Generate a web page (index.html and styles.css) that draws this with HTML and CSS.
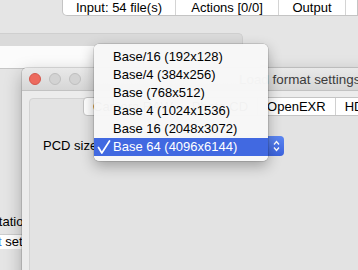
FILE: index.html
```html
<!DOCTYPE html>
<html>
<head>
<meta charset="utf-8">
<link rel="stylesheet" href="styles.css">
</head>
<body>
<div class="backwin">
  <div class="topbar">
    <div class="seg s1">Input: 54 file(s)</div>
    <div class="seg s2">Actions [0/0]</div>
    <div class="seg s3">Output</div>
    <div class="seg s4"></div>
  </div>
  <div class="gap1"></div>
  <div class="band"></div>
  <div class="field"></div>
  <div class="lower">
    <div class="lbl">Orientation</div>
    <div class="tf"><span class="blue">t</span> set</div>
  </div>
</div>

<div class="frontwin">
  <div class="titlebar">
    <span class="light red"></span>
    <span class="light"></span>
    <span class="light"></span>
    <span class="title">Load format settings:</span>
  </div>
  <div class="content">
    <div class="pane">
      <div class="tabs">
        <div class="tab">Camera RAW</div>
        <div class="tab">Photo CD</div>
        <div class="tab">OpenEXR</div>
        <div class="tab">HDR</div>
      </div>
      <div class="row">
        <span class="label">PCD size:</span>
        <div class="popup">
          <span class="ptext">Base 64 (4096x6144)</span>
          <span class="arrows">
            <svg width="17" height="20" viewBox="0 0 17 20"><polyline points="7,8.5 9.5,5.5 12,8.5" fill="none" stroke="#fff" stroke-width="1.3"/><polyline points="7,11.5 9.5,14.5 12,11.5" fill="none" stroke="#fff" stroke-width="1.3"/></svg>
          </span>
        </div>
      </div>
    </div>
  </div>
</div>

<div class="menu">
  <div class="item">Base/16 (192x128)</div>
  <div class="item">Base/4 (384x256)</div>
  <div class="item">Base (768x512)</div>
  <div class="item">Base 4 (1024x1536)</div>
  <div class="item">Base 16 (2048x3072)</div>
  <div class="item sel"><svg class="check" width="14" height="15" viewBox="0 0 14 15"><polyline points="1.5,7.5 4.8,13 12.5,1" fill="none" stroke="#fff" stroke-width="1.7" stroke-linecap="round" stroke-linejoin="round"/></svg>Base 64 (4096x6144)</div>
</div>
</body>
</html>
```

FILE: styles.css
```css
* { box-sizing: border-box; }
html, body { margin: 0; padding: 0; }
body {
  width: 358px;
  height: 270px;
  overflow: hidden;
  position: relative;
  background: #e5e5e5;
  font-family: "Liberation Sans", Arial, sans-serif;
  font-size: 13px;
  color: #000;
}

/* back window */
.backwin { display: flex; flex-direction: column; height: 270px; }
.topbar {
  display: flex;
  flex: none;
  height: 16px;
  margin-left: 62px;
  background: #fff;
  border: 1px solid #c4c4c4;
  border-top: 0;
  border-radius: 0 0 0 5px;
}
.seg { line-height: 15px; text-align: center; white-space: nowrap; border-left: 1px solid #d4d4d4; }
.s1 { width: 112px; border-left: 0; }
.s2 { width: 103px; }
.s3 { width: 67px; }
.s4 { flex: 1; }
.gap1 { height: 17px; flex: none; }
.band {
  flex: none;
  width: 243px;
  height: 13px;
  background: #dadada;
  border-top: 1px solid #cfcfcf;
  border-right: 1px solid #cfcfcf;
  border-radius: 0 5px 0 0;
}
.field {
  flex: none;
  width: 260px;
  height: 23px;
  background: #fbfbfb;
  border-bottom: 1px solid #c6c6c6;
}
.lower { display: flex; flex-direction: column; padding-top: 145px; }
.lbl { margin-left: -33px; line-height: 15px; white-space: nowrap; }
.tf {
  margin-top: 5px;
  width: 40px;
  height: 15px;
  background: #fff;
  border-top: 1px solid #cdcdcd;
  line-height: 14px;
  margin-left: -2px;
  white-space: nowrap;
}
.blue { color: #3f7bea; }

/* front window */
.frontwin {
  position: absolute;
  left: 22px;
  top: 68px;
  width: 350px;
  height: 240px;
  background: #ececec;
  border-radius: 5px 5px 0 0;
  box-shadow: 0 0 0 1px rgba(0,0,0,0.12), 0 6px 18px rgba(0,0,0,0.28);
  display: flex;
  flex-direction: column;
}
.titlebar {
  flex: none;
  height: 23px;
  display: flex;
  align-items: center;
  padding-left: 7px;
  gap: 8px;
  background: linear-gradient(#e9e9e9, #d6d6d6);
  border-bottom: 1px solid #c2c2c2;
  border-radius: 5px 5px 0 0;
}
.light {
  width: 12px;
  height: 12px;
  border-radius: 50%;
  background: #d3d3d3;
  border: 1px solid #bfbfbf;
  flex: none;
}
.light.red { background: #ed6a5e; border-color: #d4574c; }
.title { margin-left: 150px; color: #3b3b3b; white-space: nowrap; font-size: 13.4px; }

.content { flex: 1; padding: 7px 0 0 7px; }
.pane {
  height: 200px;
  background: #e3e3e3;
  border: 1px solid #d3d3d3;
  border-radius: 4px;
}
.tabs {
  display: flex;
  height: 19px;
  margin: -2px 0 0 53px;
  background: #fff;
  border: 1px solid #c4c4c4;
  border-radius: 4px;
  width: 320px;
}
.tab { padding: 0 9px; line-height: 17px; border-left: 1px solid #d0d0d0; white-space: nowrap; }
.tab:first-child { border-left: 0; }
.row {
  display: flex;
  align-items: center;
  margin-top: 20px;
  padding-left: 13px;
  gap: 3px;
}
.label { line-height: 20px; }
.popup {
  display: flex;
  width: 180px;
  height: 20px;
  background: #fff;
  border: 1px solid #c4c4c4;
  border-radius: 4px;
}
.ptext { flex: 1; padding-left: 9px; line-height: 18px; }
.arrows {
  width: 17px;
  margin: -1px -1px -1px 0;
  background: linear-gradient(#5b86f2, #3b62dd);
  border-radius: 0 4px 4px 0;
  display: flex;
}

/* popup menu */
.menu {
  position: absolute;
  left: 94px;
  top: 44px;
  width: 174px;
  height: 117px;
  padding: 4px 0 5px;
  background: rgba(247,247,247,0.975);
  border-radius: 5px;
  box-shadow: 0 0 0 0.5px rgba(0,0,0,0.22), 0 5px 14px rgba(0,0,0,0.3);
}
.item {
  position: relative;
  height: 18px;
  line-height: 18px;
  padding-left: 19px;
  white-space: nowrap;
}
.item.sel { background: #4169e1; color: #fff; }
.check { position: absolute; left: 3px; top: 2px; }
```
